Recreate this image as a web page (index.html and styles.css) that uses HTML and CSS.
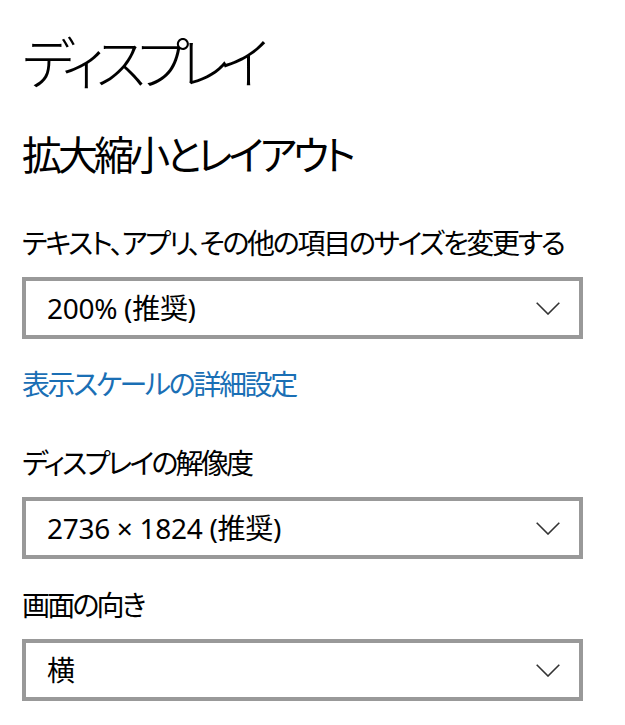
FILE: index.html
```html
<!DOCTYPE html>
<html lang="ja">
<head>
<meta charset="utf-8">
<link rel="stylesheet" href="styles.css">
</head>
<body>
<main class="page">
  <h1 class="title">ディスプレイ</h1>
  <h2 class="subtitle">拡大縮小とレイアウト</h2>

  <div class="label label-first">テキスト、アプリ、その他の項目のサイズを変更する</div>
  <div class="select">
    <span class="select-text">200% (推奨)</span>
    <svg class="chevron" width="24" height="13" viewBox="0 0 24 13"><path d="M0.7 0.7 L12 12 L23.3 0.7" fill="none" stroke="#333" stroke-width="1.6"/></svg>
  </div>

  <a class="link" href="#">表示スケールの詳細設定</a>

  <div class="label label-res">ディスプレイの解像度</div>
  <div class="select">
    <span class="select-text">2736 × 1824 (推奨)</span>
    <svg class="chevron" width="24" height="13" viewBox="0 0 24 13"><path d="M0.7 0.7 L12 12 L23.3 0.7" fill="none" stroke="#333" stroke-width="1.6"/></svg>
  </div>

  <div class="label label-orient">画面の向き</div>
  <div class="select">
    <span class="select-text">横</span>
    <svg class="chevron" width="24" height="13" viewBox="0 0 24 13"><path d="M0.7 0.7 L12 12 L23.3 0.7" fill="none" stroke="#333" stroke-width="1.6"/></svg>
  </div>
</main>
</body>
</html>
```

FILE: styles.css
```css
html, body {
  margin: 0;
  padding: 0;
  background: #ffffff;
}

.page {
  padding: 0 0 0 22px;
  width: 561px;
  font-family: "Noto Sans", "Noto Sans CJK JP", sans-serif;
  color: #000;
  font-feature-settings: "palt";
  display: flex;
  flex-direction: column;
}

.title {
  margin: 24px 0 0 0;
  font-size: 56px;
  line-height: 76px;
  font-weight: 300;
  letter-spacing: -9px;
  white-space: nowrap;
}

.subtitle {
  margin: 29px 0 0 0;
  font-size: 40px;
  line-height: 52px;
  font-weight: 400;
  letter-spacing: -4px;
  white-space: nowrap;
}

.label {
  font-size: 28px;
  line-height: 40px;
  letter-spacing: -2.8px;
  white-space: nowrap;
}

.label-first {
  margin-top: 42px;
  letter-spacing: -2.3px;
}
.label-res { margin-top: 39px; }
.label-orient { margin-top: 26px; }

.select {
  margin-top: 14px;
  box-sizing: border-box;
  height: 62px;
  border: 4px solid #999999;
  display: flex;
  align-items: center;
  justify-content: space-between;
  padding: 0 19px 0 21px;
}

.select-text {
  font-size: 28px;
  line-height: 40px;
  letter-spacing: -0.3px;
  white-space: nowrap;
}

.chevron {
  display: block;
}

.link {
  margin-top: 25px;
  align-self: flex-start;
  font-size: 28px;
  line-height: 40px;
  color: #1a6fb5;
  text-decoration: none;
  letter-spacing: -2.4px;
  white-space: nowrap;
}
```
